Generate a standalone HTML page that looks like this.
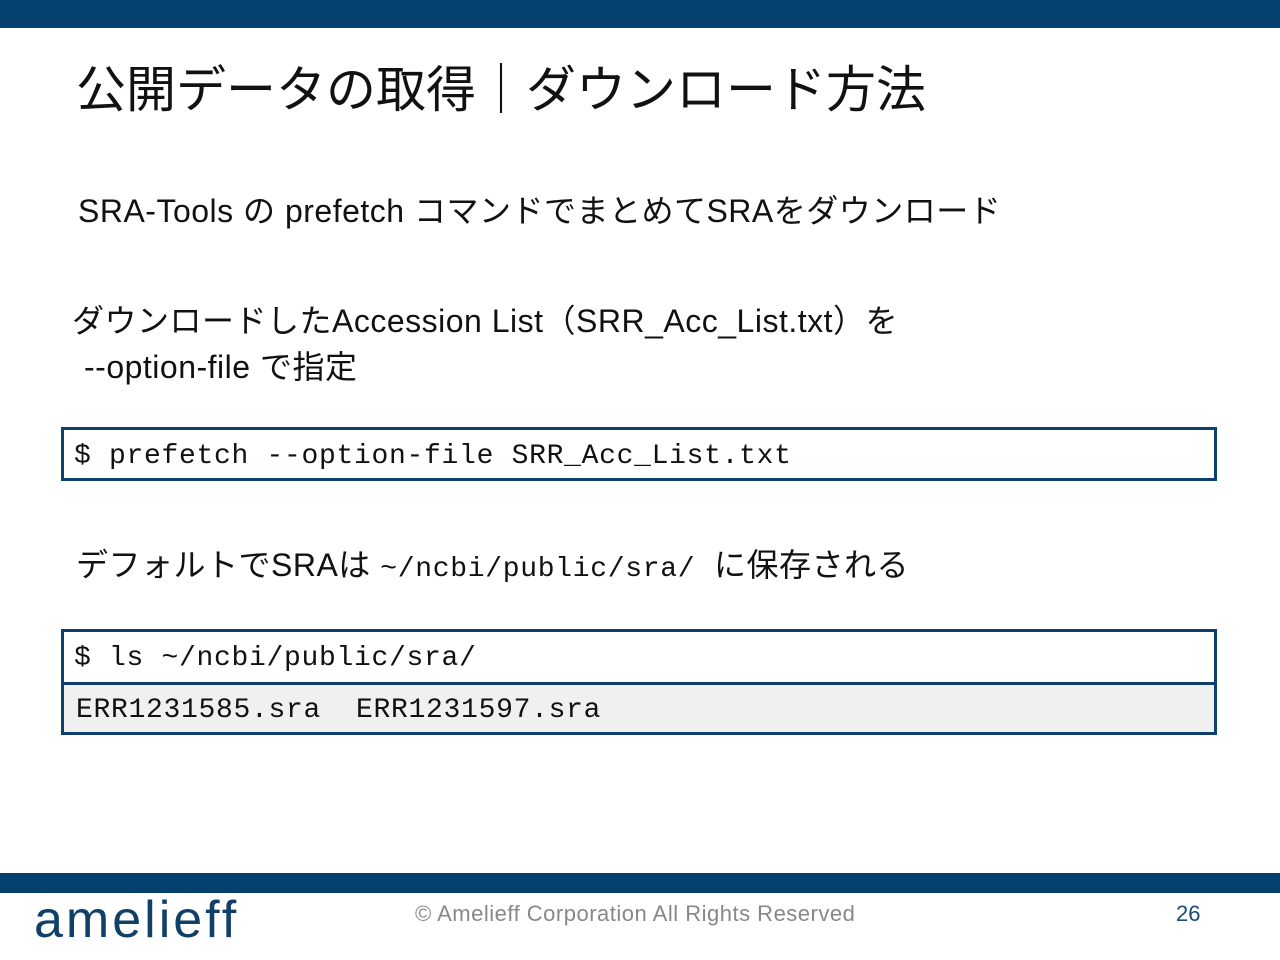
<!DOCTYPE html>
<html><head><meta charset="utf-8"><style>
body{margin:0;width:1280px;height:960px;position:relative;background:#fff;font-family:"Liberation Sans","Noto Sans CJK JP",sans-serif;color:#111;overflow:hidden}
.a{position:absolute;white-space:pre}
.mono{font-family:"Liberation Mono","DejaVu Sans Mono",monospace;font-size:28px;letter-spacing:0.7px}
.t{font-size:32px;letter-spacing:0.5px}
.box{position:absolute;left:61px;width:1150px;border:3px solid #0e3f6e;background:#fff}
</style></head><body>
<div class="a" style="left:0;top:0;width:1280px;height:28px;background:#05406f"></div>
<div class="a" style="left:76px;top:50px;font-size:50px;color:#111">公開データの取得｜ダウンロード方法</div>
<div class="a t" style="left:78px;top:186px">SRA-Tools の prefetch コマンドでまとめてSRAをダウンロード</div>
<div class="a t" style="left:72px;top:296px">ダウンロードしたAccession List（SRR_Acc_List.txt）を</div>
<div class="a t" style="left:84px;top:342px">--option-file で指定</div>
<div class="box" style="top:427px;height:48px"><div class="a mono" style="left:10px;top:11px">$ prefetch --option-file SRR_Acc_List.txt</div></div>
<div class="a t" style="left:76px;top:540px">デフォルトでSRAは <span class="mono">~/ncbi/public/sra/</span>  に保存される</div>
<div class="box" style="top:629px;height:100px;">
<div class="a mono" style="left:10px;top:11px">$ ls ~/ncbi/public/sra/</div>
<div class="a" style="left:0;top:50px;width:1150px;height:3px;background:#0e3f6e"></div>
<div class="a" style="left:0;top:53px;width:1150px;height:47px;background:#f0f0f0"></div>
<div class="a mono" style="left:12px;top:63px">ERR1231585.sra  ERR1231597.sra</div>
</div>
<div class="a" style="left:0;top:873px;width:1280px;height:20px;background:#05406f"></div>
<div class="a" style="left:34px;top:890px;font-size:52px;color:#103f68;letter-spacing:3px">amelieff</div>
<div class="a" style="left:415px;top:901px;font-size:22px;color:#888;letter-spacing:0.5px">© Amelieff Corporation All Rights Reserved</div>
<div class="a" style="left:1176px;top:901px;font-size:22px;color:#1a4a7a">26</div>
</body></html>
